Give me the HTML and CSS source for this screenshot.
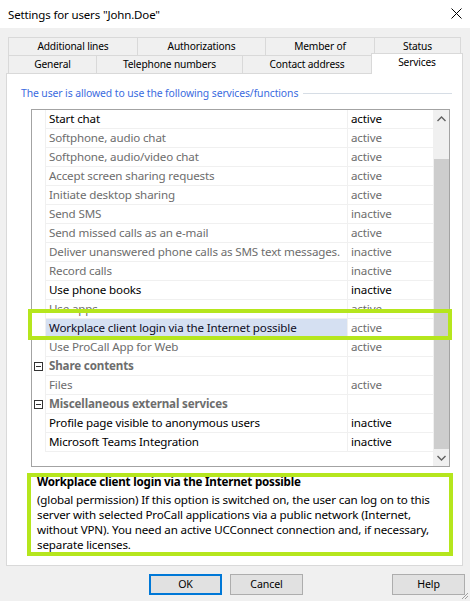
FILE: index.html
```html
<!DOCTYPE html>
<html>
<head>
<meta charset="utf-8">
<title>Settings for users "John.Doe"</title>
<link rel="stylesheet" href="styles.css">
</head>
<body>
<div class="titlebar">
  <span class="title">Settings for users "John.Doe"</span>
  <svg class="close" width="11" height="11" viewBox="0 0 11 11"><path d="M0.5 0.5 L10.5 10.5 M10.5 0.5 L0.5 10.5" stroke="#000" stroke-width="1" fill="none"/></svg>
</div>
<div class="tabs">
  <div class="tabrow">
    <div class="tab t-addl">Additional lines</div>
    <div class="tab t-auth">Authorizations</div>
    <div class="tab t-member">Member of</div>
    <div class="tab t-status last">Status</div>
  </div>
  <div class="tabrow">
    <div class="tab t-general">General</div>
    <div class="tab t-phone">Telephone numbers</div>
    <div class="tab t-contact">Contact address</div>
    <div class="tab t-services selected">Services</div>
  </div>
</div>
<div class="panel">
  <div class="group-head"><span class="group-label">The user is allowed to use the following services/functions</span><span class="rule"></span></div>
  <div class="listbox">
    <div class="rows">
      <div class="row"><div class="gut"></div><div class="name strong">Start chat</div><div class="val strong">active</div></div>
      <div class="row"><div class="gut"></div><div class="name">Softphone, audio chat</div><div class="val">active</div></div>
      <div class="row"><div class="gut"></div><div class="name">Softphone, audio/video chat</div><div class="val">active</div></div>
      <div class="row"><div class="gut"></div><div class="name">Accept screen sharing requests</div><div class="val">active</div></div>
      <div class="row"><div class="gut"></div><div class="name">Initiate desktop sharing</div><div class="val">active</div></div>
      <div class="row"><div class="gut"></div><div class="name">Send SMS</div><div class="val">inactive</div></div>
      <div class="row"><div class="gut"></div><div class="name">Send missed calls as an e-mail</div><div class="val">active</div></div>
      <div class="row"><div class="gut"></div><div class="name">Deliver unanswered phone calls as SMS text messages.</div><div class="val">inactive</div></div>
      <div class="row"><div class="gut"></div><div class="name">Record calls</div><div class="val">inactive</div></div>
      <div class="row"><div class="gut"></div><div class="name strong">Use phone books</div><div class="val strong">inactive</div></div>
      <div class="row"><div class="gut"></div><div class="name">Use apps</div><div class="val">active</div></div>
      <div class="row"><div class="gut"></div><div class="name sel">Workplace client login via the Internet possible</div><div class="val">active</div></div>
      <div class="row"><div class="gut"></div><div class="name">Use ProCall App for Web</div><div class="val">active</div></div>
      <div class="row group"><div class="gut"><svg width="9" height="9" viewBox="0 0 9 9"><rect x="0.5" y="0.5" width="8" height="8" fill="#fff" stroke="#333"/><path d="M2 4.5 H7" stroke="#333"/></svg></div><div class="name">Share contents</div><div class="val"></div></div>
      <div class="row"><div class="gut"></div><div class="name">Files</div><div class="val">active</div></div>
      <div class="row group"><div class="gut"><svg width="9" height="9" viewBox="0 0 9 9"><rect x="0.5" y="0.5" width="8" height="8" fill="#fff" stroke="#333"/><path d="M2 4.5 H7" stroke="#333"/></svg></div><div class="name">Miscellaneous external services</div><div class="val"></div></div>
      <div class="row"><div class="gut"></div><div class="name strong">Profile page visible to anonymous users</div><div class="val strong">inactive</div></div>
      <div class="row"><div class="gut"></div><div class="name strong">Microsoft Teams Integration</div><div class="val strong">inactive</div></div>
    </div>
    <div class="scrollbar">
      <div class="sb-btn"><svg width="9" height="6" viewBox="0 0 9 6"><path d="M0.5 5 L4.5 1 L8.5 5" stroke="#606060" stroke-width="1.4" fill="none"/></svg></div>
      <div class="sb-track"><div class="sb-thumb"></div></div>
      <div class="sb-btn"><svg width="9" height="6" viewBox="0 0 9 6"><path d="M0.5 1 L4.5 5 L8.5 1" stroke="#606060" stroke-width="1.4" fill="none"/></svg></div>
    </div>
    <div class="callout"></div>
  </div>
  <div class="desc">
    <div class="desc-title">Workplace client login via the Internet possible</div>
    <div class="desc-body">(global permission) If this option is switched on, the user can log on to this<br>server with selected ProCall applications via a public network (Internet,<br>without VPN). You need an active UCConnect connection and, if necessary,<br>separate licenses.</div>
  </div>
</div>
<div class="buttons">
  <div class="btn ok">OK</div>
  <div class="btn cancel">Cancel</div>
  <div class="btn help">Help</div>
</div>
<svg class="grip" width="8" height="8" viewBox="0 0 8 8"><path d="M7 1 L1 7 M7 4 L4 7" stroke="#a0a0a0" stroke-width="1" fill="none"/></svg>
</body>
</html>
```

FILE: styles.css
```css
html, body {
  margin: 0;
  padding: 0;
}
body {
  width: 470px;
  height: 601px;
  overflow: hidden;
  background: #f0f0f0;
  font-family: "Noto Sans", "Open Sans", sans-serif;
  font-size: 12px;
  color: #000;
  position: relative;
}
.titlebar {
  height: 28px;
  background: #fff;
  display: flex;
  align-items: center;
  justify-content: space-between;
  padding: 0 8px 0 8px;
  box-sizing: border-box;
}
.title {
  font-size: 11.5px;
  letter-spacing: -0.15px;
}
.close {
  display: block;
  margin-top: -1px;
}
.tabs {
  padding-top: 9px;
  font-size: 10.2px;
  letter-spacing: -0.15px;
}
.tabrow {
  display: flex;
  align-items: flex-start;
  margin-left: 8px;
  height: 18px;
}
.tab {
  box-sizing: border-box;
  height: 18px;
  border: 1px solid #d9d9d9;
  border-right: none;
  border-bottom: none;
  background: #f0f0f0;
  text-align: center;
  line-height: 17px;
  white-space: nowrap;
}
.tab.last {
  border-right: 1px solid #d9d9d9;
}
.t-addl { width: 129px; }
.t-auth { width: 128px; }
.t-member { width: 109px; }
.t-status { width: 87px; }
.t-general { width: 88px; }
.t-phone { width: 146px; }
.t-contact { width: 129px; }
.t-services { width: 92px; }
.tab.selected {
  height: 21px;
  margin-top: -2px;
  background: #fff;
  border-right: 1px solid #d9d9d9;
  line-height: 17px;
  position: relative;
  z-index: 1;
}
.panel {
  box-sizing: border-box;
  margin-left: 6px;
  width: 457px;
  height: 493px;
  background: #fff;
  border: 1px solid #d9d9d9;
}
.group-head {
  display: flex;
  align-items: center;
  margin: 11px 10px 0 14px;
  height: 16px;
  color: #3a6be0;
  font-size: 10.4px;
  letter-spacing: -0.1px;
}
.group-label {
  white-space: nowrap;
}
.rule {
  flex: 1;
  height: 1px;
  background: #d6dde5;
  margin-left: 5px;
}
.listbox {
  margin: 8px 0 0 24px;
  width: 419px;
  height: 358px;
  box-sizing: border-box;
  border: 1px solid #a3a3a3;
  display: flex;
  position: relative;
  font-size: 11.6px;
  letter-spacing: -0.15px;
}
.rows {
  width: 401px;
}
.row {
  display: flex;
  height: 19px;
}
.gut {
  width: 14px;
  box-sizing: border-box;
  border-right: 1px solid #f0f0f0;
  display: flex;
  align-items: center;
  justify-content: center;
  padding-bottom: 1px;
}
.gut svg {
  display: block;
}
.name, .val {
  box-sizing: border-box;
  height: 19px;
  border-bottom: 1px solid #f0f0f0;
  line-height: 18px;
  padding-left: 3px;
  color: #6d6d6d;
  white-space: nowrap;
  overflow: hidden;
}
.name {
  width: 302px;
  border-right: 1px solid #f0f0f0;
}
.val {
  width: 85px;
}
.strong {
  color: #000;
}
.name.sel {
  background: #d5e0f2;
  color: #0c0c24;
}
.group .name {
  font-weight: bold;
}
.scrollbar {
  width: 16px;
  background: #f0f0f0;
  display: flex;
  flex-direction: column;
}
.sb-btn {
  height: 17px;
  display: flex;
  align-items: center;
  justify-content: center;
}
.sb-btn svg {
  display: block;
}
.sb-track {
  flex: 1;
  padding-top: 32px;
  box-sizing: border-box;
}
.sb-thumb {
  height: 290px;
  background: #cdcdcd;
  margin-left: 1px;
}
.callout {
  position: absolute;
  left: -4px;
  top: 199px;
  width: 424px;
  height: 31px;
  box-sizing: border-box;
  border: 4px solid #b5e61d;
}
.desc {
  margin: 6px 0 0 20px;
  width: 426px;
  height: 83px;
  box-sizing: border-box;
  border: 4px solid #b5e61d;
  padding: 0 6px;
  overflow: hidden;
  line-height: 15px;
  font-size: 11.6px;
  letter-spacing: -0.15px;
}
.desc-title {
  font-weight: bold;
  margin-top: -3px;
  white-space: nowrap;
  letter-spacing: -0.2px;
}
.desc-body {
  margin-top: 3px;
  white-space: nowrap;
}
.buttons {
  display: flex;
  margin-top: 8px;
  padding-left: 149px;
  padding-right: 5px;
  font-size: 10.6px;
  letter-spacing: -0.1px;
}
.btn {
  width: 73px;
  height: 21px;
  box-sizing: border-box;
  background: #e1e1e1;
  border: 1px solid #adadad;
  text-align: center;
  line-height: 19px;
}
.btn.ok {
  border: 2px solid #0078d7;
  line-height: 17px;
}
.btn.cancel {
  margin-left: 8px;
}
.btn.help {
  margin-left: auto;
}
.grip {
  position: absolute;
  right: 1px;
  bottom: 1px;
}
```
